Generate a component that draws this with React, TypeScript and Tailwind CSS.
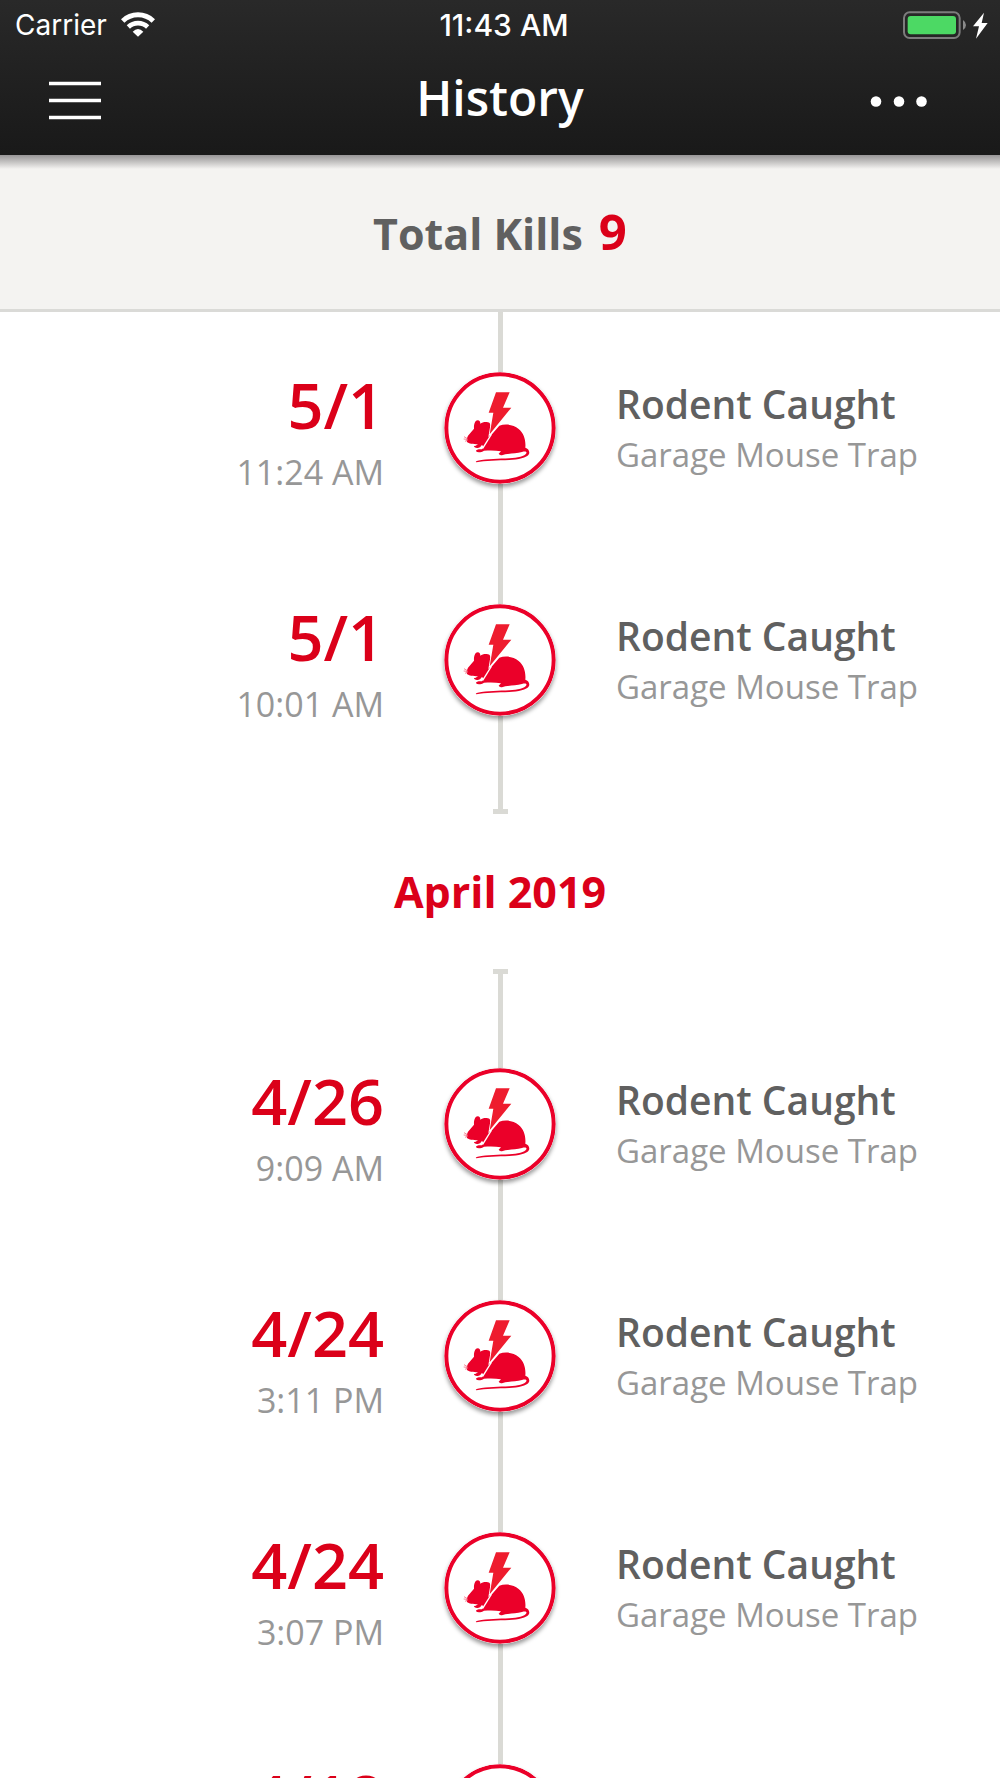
type Catch = { date: string; time?: string };

const mayCatches: Catch[] = [
  { date: '5/1', time: '11:24 AM' },
  { date: '5/1', time: '10:01 AM' },
];

const aprilCatches: Catch[] = [
  { date: '4/26', time: '9:09 AM' },
  { date: '4/24', time: '3:11 PM' },
  { date: '4/24', time: '3:07 PM' },
  { date: '4/18' },
];

const WifiIcon = () => (
  <svg viewBox="0 0 102 75" className="h-[25px] w-[34px]" fill="none" aria-hidden="true">
    <path d="M5 27 A66 66 0 0 1 97 27" stroke="#fff" strokeWidth="15" />
    <path d="M22 45 A42 42 0 0 1 80 45" stroke="#fff" strokeWidth="14" />
    <path d="M35 59 Q51 43 67 59 L51 74 Z" fill="#fff" />
  </svg>
);

const BatteryIcon = () => (
  <svg viewBox="0 0 258 84" className="h-7 w-[86px]" aria-hidden="true">
    <rect x="3" y="4" width="167" height="77" rx="17" fill="none" stroke="#7c7c7c" strokeWidth="6" />
    <rect x="14" y="15" width="145" height="55" rx="9" fill="#4cd964" />
    <path d="M180 27 Q189 33 189 42 Q189 51 180 57 Z" fill="#8a8a8a" />
    <path d="M243 5 L210 46 H228 L219 83 L254 36 H236 Z" fill="#fff" />
  </svg>
);

const RodentIcon = () => (
  <svg viewBox="42 35 336 336" className="relative h-28 w-28 rounded-full shadow-[0_3px_4px_rgba(0,0,0,0.4)]" aria-hidden="true">
    <circle cx="210" cy="203" r="161" fill="#fff" stroke="#eb0029" strokeWidth="12" />
    <path
      fill="#eb0029"
      d="M109 238 L114 226 L132 205 C131 193 135 180 143 180 C149 180 151 185 151 190 C158 184 172 183 179 188 C184 197 181 210 179 222 L182 226 L208 196 C226 190 250 192 266 206 C282 219 288 240 286 262 C295 264 300 273 297 281 C291 293 264 298 238 299 C204 300 165 301 139 306 C136 305 138 302 143 301 C172 295 208 296 238 294 C263 293 285 288 289 279 C291 273 284 273 276 275 C259 280 240 279 226 282 C218 286 209 285 206 280 L213 273 C197 270 179 271 162 271 C154 276 144 278 138 273 C137 268 146 266 156 267 L161 261 L156 253 C151 261 145 265 138 262 C130 260 130 257 137 256 L144 252 C130 251 116 250 111 245 Z"
    />
    <path d="M158 264 L184 222" stroke="#fff" strokeWidth="4" />
    <path
      d="M198 96 H239 L219 142 H244 L179 222 L190 157 H176 Z"
      fill="#ee1c2e"
      stroke="#fff"
      strokeWidth="5"
      paintOrder="stroke"
    />
    <path d="M102 229 L112 235 M101 236 L112 237 M105 243 L113 239" stroke="#f58a98" strokeWidth="3" />
  </svg>
);

const CatchRow = ({ date, time }: Catch) => (
  <li className="grid h-[232px] shrink-0 grid-cols-[1fr_112px_1fr]">
    <div className="pt-[55px] pr-15 text-right">
      <p className="text-[63px] leading-[76px] font-semibold text-[#db0019]">{date}</p>
      {time && <p className="text-[34px] leading-[58px] text-[#979797]">{time}</p>}
    </div>
    <div className="flex flex-col items-center">
      <span className="w-[5px] flex-1 bg-[#dadad5]" />
      <RodentIcon />
      <span className="w-[5px] flex-1 bg-[#dadad5]" />
    </div>
    <div className="pt-[66px] pl-15 whitespace-nowrap">
      <p className="text-[39px] leading-[52px] font-semibold text-[#606060]">Rodent Caught</p>
      <p className="text-[33px] leading-[50px] text-[#979797]">Garage Mouse Trap</p>
    </div>
  </li>
);

const MonthDivider = ({ label }: { label: string }) => (
  <div className="flex h-[232px] shrink-0 flex-col items-center">
    <span className="h-[33px] w-[5px] bg-[#dadad5]" />
    <span className="h-[5px] w-[15px] bg-[#dadad5]" />
    <h2 className="flex flex-1 items-center text-[43px] leading-[60px] font-bold text-[#db0019]">{label}</h2>
    <span className="h-[5px] w-[15px] bg-[#dadad5]" />
    <span className="h-[34px] w-[5px] bg-[#dadad5]" />
  </div>
);

const App = () => {
  return (
    <div className="flex h-screen flex-col overflow-hidden bg-white font-['Open_Sans',sans-serif]">
      <header className="shrink-0 bg-linear-to-b from-[#292929] to-[#191919] text-white">
        <div className="grid h-[49px] grid-cols-[1fr_auto_1fr] items-center px-[15px] font-['Inter',sans-serif] text-[28px] leading-8">
          <div className="flex items-center gap-3.5">
            <span>Carrier</span>
            <WifiIcon />
          </div>
          <span className="pl-2 text-[30px] font-medium">11:43 AM</span>
          <div className="-mr-1 flex justify-end">
            <BatteryIcon />
          </div>
        </div>
        <div className="grid h-[106px] grid-cols-[1fr_auto_1fr] items-center px-12">
          <button type="button" aria-label="Menu" className="h-[104px] w-[54px]">
            <svg viewBox="0 0 54 104" className="h-full w-full" aria-hidden="true">
              <path d="M1 33.500 H53 M1 50.500 H53 M1 67.500 H53" stroke="#fff" strokeWidth="3.500" />
            </svg>
          </button>
          <h1 className="pb-2 text-[48px] leading-[64px] font-semibold">History</h1>
          <button type="button" aria-label="More options" className="h-[104px] w-[84px] justify-self-end">
            <svg viewBox="0 0 84 104" className="h-full w-full" fill="#fff" aria-hidden="true">
              <circle cx="8" cy="51.500" r="5.300" />
              <circle cx="31" cy="51.500" r="5.300" />
              <circle cx="53.500" cy="51.500" r="5.300" />
            </svg>
          </button>
        </div>
      </header>

      <section className="shrink-0 border-b-[3px] border-[#dadad7] bg-[#f4f3f1]">
        <div className="h-3.5 bg-linear-to-b from-[#979596] to-[#f4f3f1]" />
        <p className="flex h-[140px] items-baseline justify-center gap-4 pt-[29px] text-[43px] leading-[66px] font-bold text-[#606060]">
          Total Kills
          <span className="text-[49px] text-[#db0019]">9</span>
        </p>
      </section>

      <main className="flex min-h-0 flex-1 flex-col">
        <ul>
          {mayCatches.map((item, i) => (
            <CatchRow key={i} {...item} />
          ))}
        </ul>
        <MonthDivider label="April 2019" />
        <ul>
          {aprilCatches.map((item, i) => (
            <CatchRow key={i} {...item} />
          ))}
        </ul>
      </main>
    </div>
  );
};

export default App;
